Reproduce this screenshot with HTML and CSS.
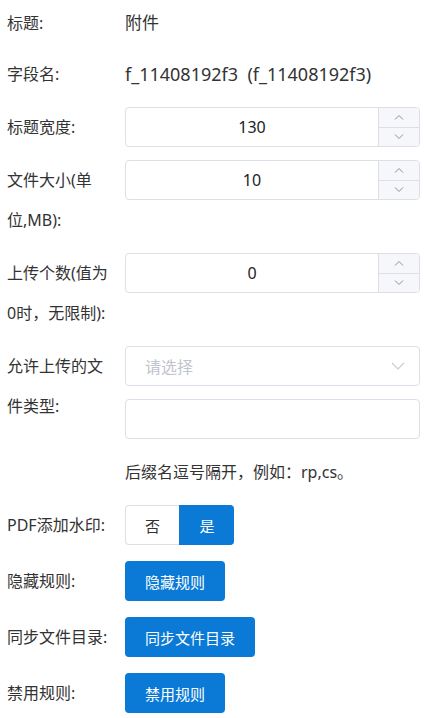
FILE: index.html
```html
<!DOCTYPE html>
<html lang="zh-CN">
<head>
<meta charset="utf-8">
<title>附件</title>
<link rel="stylesheet" href="styles.css">
</head>
<body>
<div class="form">
  <div class="row">
    <div class="label">标题:</div>
    <div class="content"><span class="value">附件</span></div>
  </div>
  <div class="row">
    <div class="label">字段名:</div>
    <div class="content"><span class="value value-code">f_11408192f3&nbsp;&nbsp;(f_11408192f3)</span></div>
  </div>
  <div class="row">
    <div class="label">标题宽度:</div>
    <div class="content">
      <div class="number">
        <div class="number-val">130</div>
        <div class="stepper">
          <span class="step"><svg width="10" height="6" viewBox="0 0 10 6"><path d="M1 5.5 L5 1.5 L9 5.5" fill="none" stroke="#8a8f99" stroke-width="1"/></svg></span>
          <span class="step step-down"><svg width="10" height="6" viewBox="0 0 10 6"><path d="M1 0.5 L5 4.5 L9 0.5" fill="none" stroke="#8a8f99" stroke-width="1"/></svg></span>
        </div>
      </div>
    </div>
  </div>
  <div class="row">
    <div class="label">文件大小(单位,MB):</div>
    <div class="content">
      <div class="number">
        <div class="number-val">10</div>
        <div class="stepper">
          <span class="step"><svg width="10" height="6" viewBox="0 0 10 6"><path d="M1 5.5 L5 1.5 L9 5.5" fill="none" stroke="#8a8f99" stroke-width="1"/></svg></span>
          <span class="step step-down"><svg width="10" height="6" viewBox="0 0 10 6"><path d="M1 0.5 L5 4.5 L9 0.5" fill="none" stroke="#8a8f99" stroke-width="1"/></svg></span>
        </div>
      </div>
    </div>
  </div>
  <div class="row">
    <div class="label">上传个数(值为0时，无限制):</div>
    <div class="content">
      <div class="number">
        <div class="number-val">0</div>
        <div class="stepper">
          <span class="step"><svg width="10" height="6" viewBox="0 0 10 6"><path d="M1 5.5 L5 1.5 L9 5.5" fill="none" stroke="#8a8f99" stroke-width="1"/></svg></span>
          <span class="step step-down"><svg width="10" height="6" viewBox="0 0 10 6"><path d="M1 0.5 L5 4.5 L9 0.5" fill="none" stroke="#8a8f99" stroke-width="1"/></svg></span>
        </div>
      </div>
    </div>
  </div>
  <div class="row">
    <div class="label">允许上传的文件类型:</div>
    <div class="content stack">
      <div class="select">
        <span class="placeholder">请选择</span>
        <svg class="arrow" width="14" height="8" viewBox="0 0 14 8"><path d="M1 1 L7 7 L13 1" fill="none" stroke="#c8ccd3" stroke-width="1.2"/></svg>
      </div>
      <div class="text-input"></div>
      <div class="hint">后缀名逗号隔开，例如：rp,cs。</div>
    </div>
  </div>
  <div class="row">
    <div class="label">PDF添加水印:</div>
    <div class="content">
      <div class="toggle">
        <span class="seg">否</span>
        <span class="seg seg-on">是</span>
      </div>
    </div>
  </div>
  <div class="row row-btn">
    <div class="label">隐藏规则:</div>
    <div class="content"><span class="btn">隐藏规则</span></div>
  </div>
  <div class="row row-btn">
    <div class="label">同步文件目录:</div>
    <div class="content"><span class="btn">同步文件目录</span></div>
  </div>
  <div class="row row-btn">
    <div class="label">禁用规则:</div>
    <div class="content"><span class="btn">禁用规则</span></div>
  </div>
</div>
</body>
</html>
```
FILE: styles.css
```css
* { box-sizing: border-box; }
html, body { margin: 0; padding: 0; background: #fff; }
body {
  font-family: "Noto Sans", "Noto Sans CJK SC", sans-serif;
  color: #303133;
}
.form {
  display: flex;
  flex-direction: column;
  gap: 13px;
  padding: 3px 9px 0 7px;
}
.row {
  display: flex;
  align-items: flex-start;
}
.row:nth-child(2) { margin-top: -2px; }
.row-btn { margin-top: 3px; }
.label {
  width: 106px;
  flex: none;
  margin-right: 12px;
  font-size: 16px;
  line-height: 40px;
  color: #333;
}
.content {
  flex: 1;
  min-width: 0;
  display: flex;
  align-items: center;
  min-height: 40px;
}
.content.stack {
  flex-direction: column;
  align-items: stretch;
  gap: 13px;
}
.value {
  font-size: 17px;
  line-height: 40px;
  color: #333;
}
.value-code { font-size: 18px; }
.number {
  flex: 1;
  height: 40px;
  display: flex;
  border: 1px solid #dcdfe6;
  border-radius: 4px;
  overflow: hidden;
}
.number-val {
  flex: 1;
  display: flex;
  align-items: center;
  justify-content: center;
  font-size: 16px;
  color: #222;
}
.stepper {
  width: 41px;
  flex: none;
  display: flex;
  flex-direction: column;
  background: #f5f7fa;
  border-left: 1px solid #dcdfe6;
}
.step {
  flex: 1;
  display: flex;
  align-items: center;
  justify-content: center;
}
.step-down { border-top: 1px solid #dcdfe6; }
.select {
  height: 40px;
  border: 1px solid #dcdfe6;
  border-radius: 4px;
  display: flex;
  align-items: center;
  justify-content: space-between;
  padding: 0 14px 0 19px;
}
.placeholder {
  font-size: 16px;
  color: #c0c4cc;
}
.text-input {
  height: 40px;
  border: 1px solid #dcdfe6;
  border-radius: 4px;
}
.hint {
  font-size: 16px;
  line-height: 40px;
  color: #333;
}
.toggle {
  display: flex;
  height: 40px;
}
.seg {
  width: 54px;
  display: flex;
  align-items: center;
  justify-content: center;
  font-size: 15px;
  border: 1px solid #dcdfe6;
  border-right: none;
  border-radius: 4px 0 0 4px;
  color: #333;
  background: #fff;
}
.seg-on {
  width: 55px;
  background: #0a7ad6;
  border-color: #0a7ad6;
  color: #fff;
  border-radius: 0 4px 4px 0;
}
.btn {
  display: inline-flex;
  align-items: center;
  height: 40px;
  padding: 0 20px;
  font-size: 15px;
  color: #fff;
  background: #0a7ad6;
  border-radius: 4px;
}
```
